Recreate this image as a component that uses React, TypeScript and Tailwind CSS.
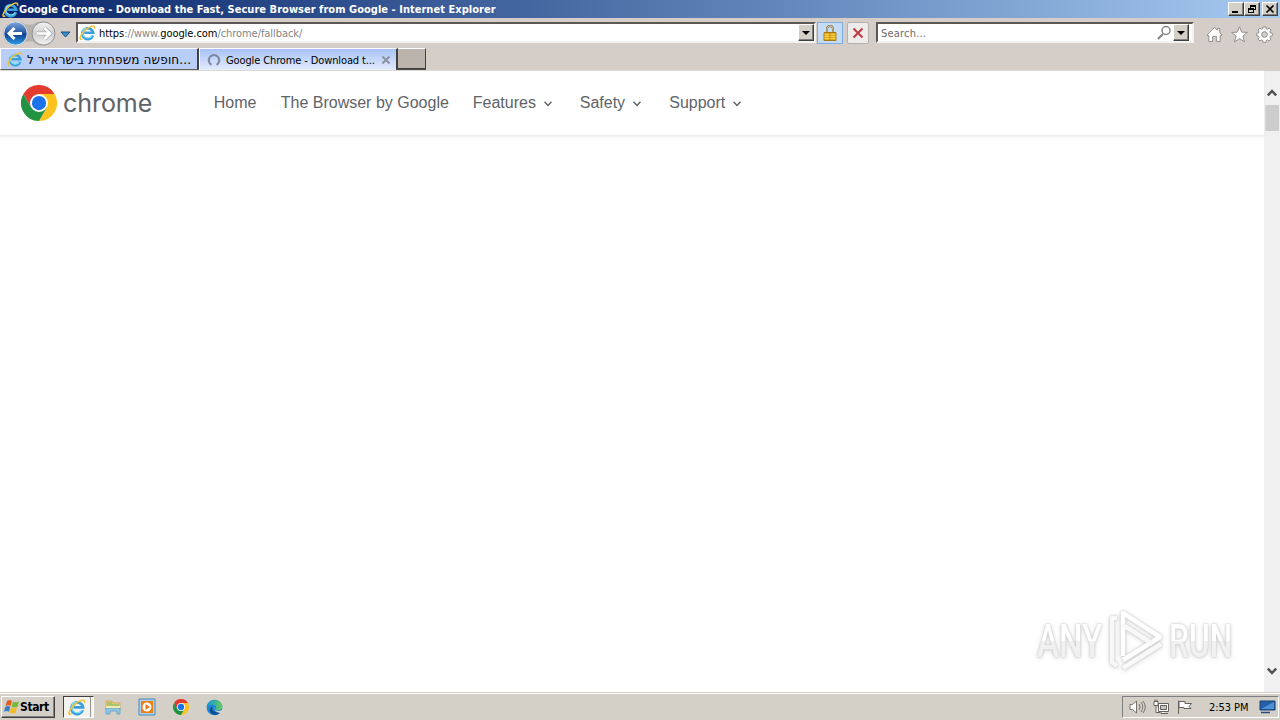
import type { ReactNode } from "react";

const raised =
  "border border-t-white border-l-white border-r-[#404040] border-b-[#404040] bg-[#d4d0c8] shadow-[inset_-1px_-1px_0_#808080]";

function IeIcon({ className }: { className: string }) {
  return (
    <svg viewBox="0 0 18 18" className={className} fill="none">
      <path d="M14.800 12.100A5.800 5.800 0 1 1 15 9.300H5.500" stroke="#3aa0dc" strokeWidth="2.800" />
      <path d="M14 12A5.400 5.400 0 0 1 4 10q-.500-5 4-6" stroke="#7fdcfa" strokeWidth="1.300" />
      <path d="M3.500 15.800C-.5 18 .6 12.500 5.300 7.600S17.800-.2 16.400 5" stroke="#efc43a" strokeWidth="1.600" />
    </svg>
  );
}

function ChromeIcon({ className }: { className: string }) {
  return (
    <svg viewBox="0 0 48 48" className={className}>
      <path d="M24 12h20.8A24 24 0 0 0 3.200 12l10.400 18z" fill="#e33b2e" />
      <path d="M34.400 30 24 48A24 24 0 0 0 44.800 12H24z" fill="#fcc31e" />
      <path d="M13.600 30 3.200 12A24 24 0 0 0 24 48l10.400-18z" fill="#229342" />
      <circle cx="24" cy="24" r="12" fill="#fff" />
      <circle cx="24" cy="24" r="9.500" fill="#1a73e8" />
    </svg>
  );
}

function WindowButton({ children }: { children: ReactNode }) {
  return (
    <button className={`flex h-[14px] w-4 items-center justify-center ${raised}`}>
      <svg viewBox="0 0 12 10" className="h-[10px] w-3 shrink-0" fill="none" stroke="#000" shapeRendering="crispEdges">
        {children}
      </svg>
    </button>
  );
}

function TitleBar() {
  return (
    <header className="flex h-[18px] items-center bg-linear-to-r from-[#0a246a] to-[#a6caf0] pr-[2px] pl-[2px]">
      <IeIcon className="size-[17px]" />
      <span className="flex-1 text-[11px] leading-none font-bold whitespace-nowrap text-white">
        <span className="tracking-[0.03px]">
          Google Chrome - Download the Fast, Secure Browser from Google - Internet Explorer
        </span>
      </span>
      <WindowButton>
        <path d="M2 8h6" strokeWidth="2" />
      </WindowButton>
      <WindowButton>
        <path d="M4 1h6M4 2h6M4.500 1v3M9.500 1v5M8 5.500h2M2 4h6M2 5h6M2.500 4v5M7.500 4v5M2 8.500h6" />
      </WindowButton>
      <div className="w-[2px]" />
      <WindowButton>
        <path d="m2.500 1.500 7 7m0-7-7 7" strokeWidth="1.700" shapeRendering="auto" />
      </WindowButton>
    </header>
  );
}

function DropButton() {
  return (
    <button className={`flex h-[17px] w-4 items-center justify-center ${raised}`}>
      <svg viewBox="0 0 8 4" className="h-1 w-2">
        <path d="M0 0h8L4 4z" />
      </svg>
    </button>
  );
}

const field =
  "flex h-[21px] items-center border-2 border-t-[#5c5854] border-l-[#5c5854] border-r-[#f4f2ee] border-b-[#f4f2ee] bg-white";

function AddressBar() {
  return (
    <div className="flex h-[30px] items-start bg-[#d5cec8] pt-1">
      <svg viewBox="0 0 76 28" className="-mt-[1px] h-7 w-[76px] shrink-0">
        <defs>
          <linearGradient id="back" x2="0" y2="1">
            <stop stopColor="#7ba7dc" />
            <stop offset=".48" stopColor="#2858a4" />
            <stop offset=".52" stopColor="#0d3d91" />
            <stop offset="1" stopColor="#2fa3e9" />
          </linearGradient>
          <linearGradient id="forward" x2="0" y2="1">
            <stop stopColor="#f4f4f4" />
            <stop offset=".5" stopColor="#cfcfd1" />
            <stop offset="1" stopColor="#f2f2f2" />
          </linearGradient>
        </defs>
        <path d="M15 .500a12 12 0 0 0 0 24q7 0 10-4h8q3 4 10 4a12 12 0 0 0 0-24q-7 0-10 3h-8q-3-3-10-3" fill="#b8b2ae" />
        <circle cx="15.500" cy="12.500" r="11.700" fill="url(#back)" stroke="#dde5ef" />
        <circle cx="43.500" cy="12.500" r="11.500" fill="url(#forward)" stroke="#8f9193" />
        <path d="M22 12.500H9m5.500-5.500L9 12.500l5.500 5.500" fill="none" stroke="#fff" strokeWidth="3" />
        <path d="M37 12.500h13m-5.500-5.500 5.500 5.500-5.500 5.500" fill="none" stroke="#aaa" strokeWidth="4" />
        <path d="M37 12.500h13m-5.500-5.500 5.500 5.500-5.500 5.500" fill="none" stroke="#fff" strokeWidth="2.500" />
        <path d="M61 11h9l-4.500 5z" fill="#3e8ccb" stroke="#164f8b" />
      </svg>
      <div className={`w-[740px] ${field}`}>
        <IeIcon className="ml-[1px] size-[17px]" />
        <span className="ml-[3px] flex-1 pt-[2px] text-[11px] leading-none whitespace-nowrap text-[#858585]">
          <span className="tracking-[-0.06px]">
            <span className="text-black">https</span>://www.<span className="text-black">google.com</span>/chrome/fallback/
          </span>
        </span>
        <DropButton />
      </div>
      <button className="ml-[1px] flex h-[22px] w-[26px] items-center justify-center border border-[#80aee0] bg-[#c5dcf6]">
        <svg viewBox="0 0 14 16" className="h-4 w-[14px]" fill="none">
          <path d="M4 8V4a3 3 0 0 1 6 0v4" stroke="#8b7951" strokeWidth="2" />
          <path d="M4 8V4a3 3 0 0 1 6 0v4" stroke="#e6dca9" strokeWidth=".7" />
          <path d="M1 7.500h12v8H1z" fill="#e3a916" stroke="#a9781b" />
          <path d="M1.500 9.500h11m-11 2h11m-11 2h11" stroke="#f3cf4c" />
          <path d="M7 8v7" stroke="#c18613" />
        </svg>
      </button>
      <button className="ml-1 flex h-[22px] w-[22px] items-center justify-center rounded-[2px] border border-[#b5b1ae] bg-[#eeebea]">
        <svg viewBox="0 0 12 12" className="size-3">
          <path d="m1.500 1.500 9 9m0-9-9 9" stroke="#bd3d43" strokeWidth="2" />
        </svg>
      </button>
      <div className={`ml-[7px] w-[318px] ${field}`}>
        <span className="ml-[3px] flex-1 pt-[2px] text-[11px] leading-none tracking-[0.200px] text-[#6b6b6b]">
          Search...
        </span>
        <svg viewBox="0 0 15 15" className="mr-[1px] size-[15px]" fill="none" stroke="#858585">
          <circle cx="9" cy="5.500" r="4" strokeWidth="1.500" />
          <path d="m6 9-5 5" strokeWidth="2.200" />
        </svg>
        <DropButton />
        <div className="w-[3px]" />
      </div>
      <div className="mt-1 ml-3 flex gap-2">
        <svg viewBox="0 0 18 18" className="size-[17px]" fill="#fff" stroke="#8c8885">
          <path d="M1 9.500 9 1.500l3 3V2.500h2.500V7l2.500 2.500-1.500 1L15 10v6.500h-4V11H7v5.500H3V10l-.8.700z" />
        </svg>
        <svg viewBox="0 0 18 18" className="size-[17px]" fill="#fff" stroke="#8c8885">
          <path d="m9 .8 2.300 5.700 6 .3-4.700 3.900 1.700 6L9 13.400l-5.300 3.300 1.700-6L.7 6.800l6-.3z" />
        </svg>
        <svg viewBox="0 0 18 18" className="size-[17px]" fill="#fff" stroke="#8c8885">
          <path d="M7.500 1h3l.4 2 1.200.5 1.800-1.200 2 2-1.200 1.800.5 1.200 2.100.4v2.700l-2.100.5-.5 1.200 1.200 1.800-2 2-1.800-1.200-1.200.5-.4 2.100h-3l-.4-2.100-1.200-.5-1.800 1.200-2-2 1.200-1.800-.5-1.200L.8 10.400V7.700l2-.4.500-1.200-1.200-1.800 2-2 1.800 1.200L7.100 3z" />
          <circle cx="9" cy="9" r="3" fill="#d5cec8" />
        </svg>
      </div>
    </div>
  );
}

function Tabs() {
  return (
    <div className="flex h-[23px] bg-[#d5cec8] text-[11px] leading-none">
      <div className="flex h-[22px] w-[199px] items-center border-t border-r-2 border-b border-l border-t-white border-r-[#404040] border-b-[#555] border-l-white bg-[#b8cdf7]">
        <IeIcon className="ml-[6px] size-4" />
        <span className="ml-1 w-[166px] pt-[2px] font-['DejaVu_Sans',sans-serif] text-xs leading-none tracking-[0.150px] whitespace-nowrap">
          חופשה משפחתית בישראייר ל...
        </span>
      </div>
      <div className="flex h-[22px] w-[199px] items-center border-t border-r-2 border-l border-t-white border-r-[#404040] border-l-white bg-linear-to-b from-[#a8c2f5] to-[#e3ebfc]">
        <svg viewBox="0 0 14 14" className="ml-[7px] size-[14px]" fill="none">
          <path d="M4.500 11.800A5.200 5.200 0 1 1 9.500 11.800" stroke="#8186a0" strokeWidth="2" />
        </svg>
        <span className="ml-[5px] w-[156px] pt-[1px] tracking-[-0.120px] whitespace-nowrap">
          Google Chrome - Download t...
        </span>
        <svg viewBox="0 0 8 8" className="size-2">
          <path d="m.5.5 7 7m0-7-7 7" stroke="#8a92a3" strokeWidth="2" />
        </svg>
      </div>
      <div className="h-[22px] w-7 border-t border-r border-b-2 border-t-white border-r-[#404040] border-b-[#404040] bg-[#bbb4ac]" />
    </div>
  );
}

const links = [
  { label: "Home", menu: false, width: "w-[67px]" },
  { label: "The Browser by Google", menu: false, width: "w-[192px]" },
  { label: "Features", menu: true, width: "w-[107px]" },
  { label: "Safety", menu: true, width: "w-[89.500px]" },
  { label: "Support", menu: true, width: "w-[90px]" },
];

function SiteHeader() {
  return (
    <div className="flex h-16 items-center bg-white pl-[21px] font-['Liberation_Sans',Arial,sans-serif] text-base text-[#5f6368] shadow-[0_1px_2px_1px_#ececec]">
      <ChromeIcon className="size-9" />
      <span className="ml-[6px] w-[150.750px] font-['Inter',sans-serif] text-[25px] leading-none tracking-[-0.050px]">
        chrome
      </span>
      <nav className="flex">
        {links.map((link) => (
          <a key={link.label} className={`flex items-center whitespace-nowrap ${link.width}`}>
            {link.label}
            {link.menu && (
              <svg viewBox="0 0 8 6" className="mt-[2px] ml-2 h-[6px] w-2" fill="none" stroke="#5f6368" strokeWidth="1.500">
                <path d="m.5.800 3.500 3.700L7.500.800" />
              </svg>
            )}
          </a>
        ))}
      </nav>
    </div>
  );
}

const word = "inline-block origin-left bg-linear-to-b from-white from-50% to-[#f1f1f1] to-50% bg-clip-text text-transparent";

function Watermark() {
  return (
    <div className="absolute right-[31px] bottom-5 flex h-[64px] w-[196px] items-center justify-between font-['Roboto',sans-serif] text-[46px] leading-none font-medium [filter:drop-shadow(0_0_1px_#c4c4c4)_drop-shadow(0_1px_2px_#ddd)]">
      <span className="w-[66px] pt-[2px]">
        <span className={`${word} scale-x-[0.72]`}>ANY</span>
      </span>
      <svg viewBox="0 0 58 64" className="h-16 w-[58px]" fill="none" stroke="#fff" strokeWidth="4.500" strokeLinejoin="round">
        <path d="M16 48V5l37 24-37 23" />
        <path d="M10 10H5v44l5 4M16 17l30 19M16 60l38-24" stroke="#f8f8f8" />
      </svg>
      <span className="w-[64px] pt-[2px]">
        <span className={`${word} scale-x-[0.69]`}>RUN</span>
      </span>
    </div>
  );
}

function Scrollbar() {
  return (
    <div className="flex w-4 flex-col items-center bg-[#f0f0f0] pt-[18px] pb-[17px]">
      <svg viewBox="0 0 10 8" className="h-2 w-[10px]" fill="none" stroke="#505050" strokeWidth="2.500">
        <path d="m.8 6.500 4.200-4.500 4.200 4.500" />
      </svg>
      <div className="mt-2 h-[26px] w-[14px] bg-[#cdcdcd]" />
      <svg viewBox="0 0 10 8" className="mt-auto h-2 w-[10px]" fill="none" stroke="#505050" strokeWidth="2.500">
        <path d="m.8 1.500 4.200 4.500 4.200-4.500" />
      </svg>
    </div>
  );
}

function Taskbar() {
  return (
    <footer className="flex h-7 items-center border-t border-[#d4d0c8] bg-[#d4d0c8] pt-[1px] text-[11px] leading-none shadow-[inset_0_1px_0_#fff]">
      <button className={`ml-[1px] flex h-[22px] w-[54px] items-center pl-[2px] font-bold ${raised}`}>
        <svg viewBox="0 0 16 16" className="h-4 w-4 shrink-0">
          <path d="M3 2q3-2 5 0L6.500 7q-2-1.500-5 0z" fill="#e45e24" />
          <path d="M9 2.500q3 1.500 6 0L13.500 8q-3 1-6-.500z" fill="#78b83e" />
          <path d="M1.200 8q3-2 5 0L4.800 13q-2-2-5 0z" fill="#397dc7" />
          <path d="M7 8.500q3 1.500 6 0L11.500 14q-3 1-6-.500z" fill="#f1bb27" />
        </svg>
        <span className="text-xs leading-none tracking-[-0.400px]">Start</span>
      </button>
      <div className="ml-2 flex h-[22px] w-[31px] border border-t-[#404040] border-r-white border-b-white border-l-[#404040] bg-[#f4f2ef]">
        <div className="flex w-[27px] items-center justify-center border-r border-[#9a9690]">
          <IeIcon className="size-[18px]" />
        </div>
      </div>
      <svg viewBox="0 0 18 18" className="ml-[10px] size-[18px]">
        <path d="M2 3h6l1 2h7v7H2z" fill="#efd276" stroke="#c6a34c" strokeWidth=".7" />
        <path d="M3 5h5M3 7h12" stroke="#67b36a" strokeWidth="1" />
        <path d="M2 10h14v6h-3v-3H6v3H2z" fill="#8cc9e8" stroke="#5799bd" strokeWidth=".7" />
        <path d="M2 9h14" stroke="#f7e9ac" strokeWidth="2" />
      </svg>
      <svg viewBox="0 0 18 18" className="ml-4 size-[18px]">
        <path d="M1 1h16v16H1z" fill="#abd1ee" stroke="#4d8ab9" />
        <path d="M3 3h12v12H3z" fill="#f07f13" />
        <circle cx="9" cy="9" r="4.500" fill="#fff" />
        <path d="m7.500 6 4.500 3-4.500 3z" fill="#ed7611" />
      </svg>
      <ChromeIcon className="ml-[17px] size-4" />
      <svg viewBox="0 0 18 18" className="ml-[17px] size-[17px]">
        <defs>
          <linearGradient id="edge">
            <stop stopColor="#1595dc" />
            <stop offset="1" stopColor="#65cf55" />
          </linearGradient>
        </defs>
        <circle cx="9" cy="9" r="8.300" fill="#1c86d2" />
        <path d="M.8 8C2-1 17-1 17.300 8q0 4-5 4-3 0-2-2 1-4-3-4-4 0-6.500 2" fill="url(#edge)" />
        <path d="M7 8c-2 5 4 8 9 5-4 6-12 4-12-1q0-3 3-4" fill="#124d92" />
        <path d="M9 8c-1.500 3 1 5 6 4.500l2-1v3c-5 1-9-2-8-6.500" fill="#d4d0c8" />
      </svg>
      <div className="mr-[1px] ml-auto flex h-[22px] w-[157px] items-center border border-t-[#808080] border-r-white border-b-white border-l-[#808080] pl-[6px]">
        <svg viewBox="0 0 17 16" className="h-4 w-[17px]" fill="#fff" stroke="#77736f">
          <path d="M1 5.500h2.500L7.500 2v12l-4-3.500H1z" />
          <path d="M10 5q2 3 0 6m2-8q3.500 5 0 10m2-11q4.500 6 0 12" fill="none" />
        </svg>
        <svg viewBox="0 0 17 16" className="ml-[7px] h-4 w-[17px]" fill="#fff" stroke="#65615e">
          <path d="M5.500 4.500h10v8h-10zM8 12.500v2h7M1 2.500h4v4H1zM2 2.500v-2m2 2v-2M3 6.500v7h4" />
          <path d="M7.500 6.500h6v4h-6z" fill="#c5c2be" />
        </svg>
        <svg viewBox="0 0 17 16" className="ml-[6px] h-4 w-[17px]" fill="#fff" stroke="#65615e">
          <path d="M2.500 15V1.500M3 2.500h6v2h6.500l-2.500 3 2 2H8v-1H3z" />
        </svg>
        <span className="ml-4 w-[47px] tracking-[-0.050px] whitespace-nowrap">2:53 PM</span>
        <svg viewBox="0 0 17 14" className="ml-[3px] h-[14px] w-[17px]">
          <path d="M1 1h15v9H1z" fill="#245fa8" stroke="#163e77" />
          <path d="m2 9 13-7v7z" fill="#4e91d4" />
          <path d="M2 12.500h9" stroke="#294d7d" strokeWidth="1.500" />
        </svg>
      </div>
    </footer>
  );
}

export default function App() {
  return (
    <div className="flex h-[720px] w-[1280px] flex-col overflow-hidden bg-white font-['DejaVu_Sans_Condensed','DejaVu_Sans',sans-serif] text-black">
      <TitleBar />
      <AddressBar />
      <Tabs />
      <div className="flex flex-1">
        <main className="relative flex-1">
          <SiteHeader />
          <Watermark />
        </main>
        <Scrollbar />
      </div>
      <Taskbar />
    </div>
  );
}
